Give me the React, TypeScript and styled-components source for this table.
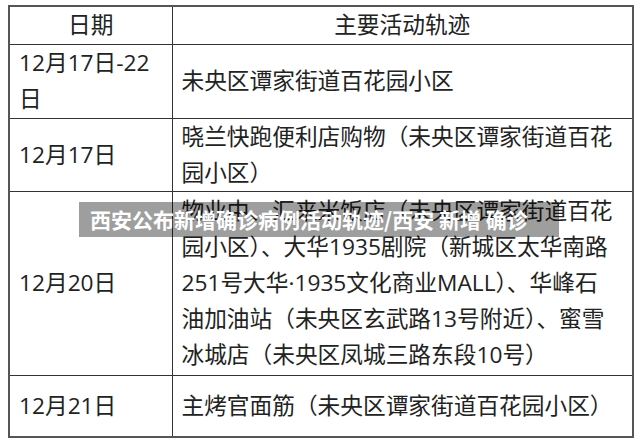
import { createGlobalStyle, styled } from 'styled-components';

const GlobalStyle = createGlobalStyle`
  html, body {
    margin: 0;
    padding: 0;
    background: #fff;
  }
  body {
    font-family: "Open Sans", "Noto Sans CJK SC", sans-serif;
    color: #222;
  }
`;

const Page = styled.div`
  position: relative;
  width: 640px;
  height: 441px;
  padding: 5px 0 0 8px;
  box-sizing: border-box;
  overflow: hidden;
`;

const Table = styled.table`
  width: 626px;
  border-collapse: collapse;
  table-layout: fixed;
  border: 2px solid #555;
  font-size: 22.7px;
  line-height: 36px;
`;

const Row = styled.tr<{ h: number }>`
  height: ${({ h }) => h}px;
`;

const HeadCell = styled.th`
  border: 1.5px solid #333;
  font-weight: 400;
  text-align: center;
  padding: 0;
  line-height: 30px;
`;

const DateCell = styled.td`
  border: 1.5px solid #333;
  padding: 0 0 0 9px;
  vertical-align: middle;
  white-space: nowrap;
`;

const TrackCell = styled.td`
  border: 1.5px solid #333;
  padding: 0 0 0 9px;
  vertical-align: middle;
  white-space: nowrap;
`;

const Banner = styled.div`
  position: absolute;
  left: 79px;
  top: 202px;
  width: 480px;
  height: 35px;
  padding-left: 11px;
  box-sizing: border-box;
  background: rgba(0, 0, 0, 0.38);
  color: #fff;
  font-family: "Noto Sans CJK SC", sans-serif;
  font-weight: 700;
  font-size: 21px;
  line-height: 35px;
  white-space: pre;
`;

type Entry = { h: number; date: string[]; track: string[] };

const rows: Entry[] = [
  { h: 74, date: ['12月17日-22', '日'], track: ['未央区谭家街道百花园小区'] },
  {
    h: 73,
    date: ['12月17日'],
    track: ['晓兰快跑便利店购物（未央区谭家街道百花', '园小区）'],
  },
  {
    h: 184,
    date: ['12月20日'],
    track: [
      '物业中、汇来米饭店（未央区谭家街道百花',
      '园小区）、大华1935剧院（新城区太华南路',
      '251号大华·1935文化商业MALL）、华峰石',
      '油加油站（未央区玄武路13号附近）、蜜雪',
      '冰城店（未央区凤城三路东段10号）',
    ],
  },
  { h: 62, date: ['12月21日'], track: ['主烤官面筋（未央区谭家街道百花园小区）'] },
];

const Lines = ({ items }: { items: string[] }) => (
  <>
    {items.map((line, i) => (
      <span key={i}>
        {line}
        {i < items.length - 1 && <br />}
      </span>
    ))}
  </>
);

export default function App() {
  return (
    <Page>
      <GlobalStyle />
      <Table>
        <colgroup>
          <col style={{ width: 163 }} />
          <col />
        </colgroup>
        <thead>
          <Row h={38}>
            <HeadCell>日期</HeadCell>
            <HeadCell>主要活动轨迹</HeadCell>
          </Row>
        </thead>
        <tbody>
          {rows.map((r, i) => (
            <Row key={i} h={r.h}>
              <DateCell>
                <Lines items={r.date} />
              </DateCell>
              <TrackCell>
                <Lines items={r.track} />
              </TrackCell>
            </Row>
          ))}
        </tbody>
      </Table>
      <Banner>西安公布新增确诊病例活动轨迹/西安 新增 确诊</Banner>
    </Page>
  );
}
